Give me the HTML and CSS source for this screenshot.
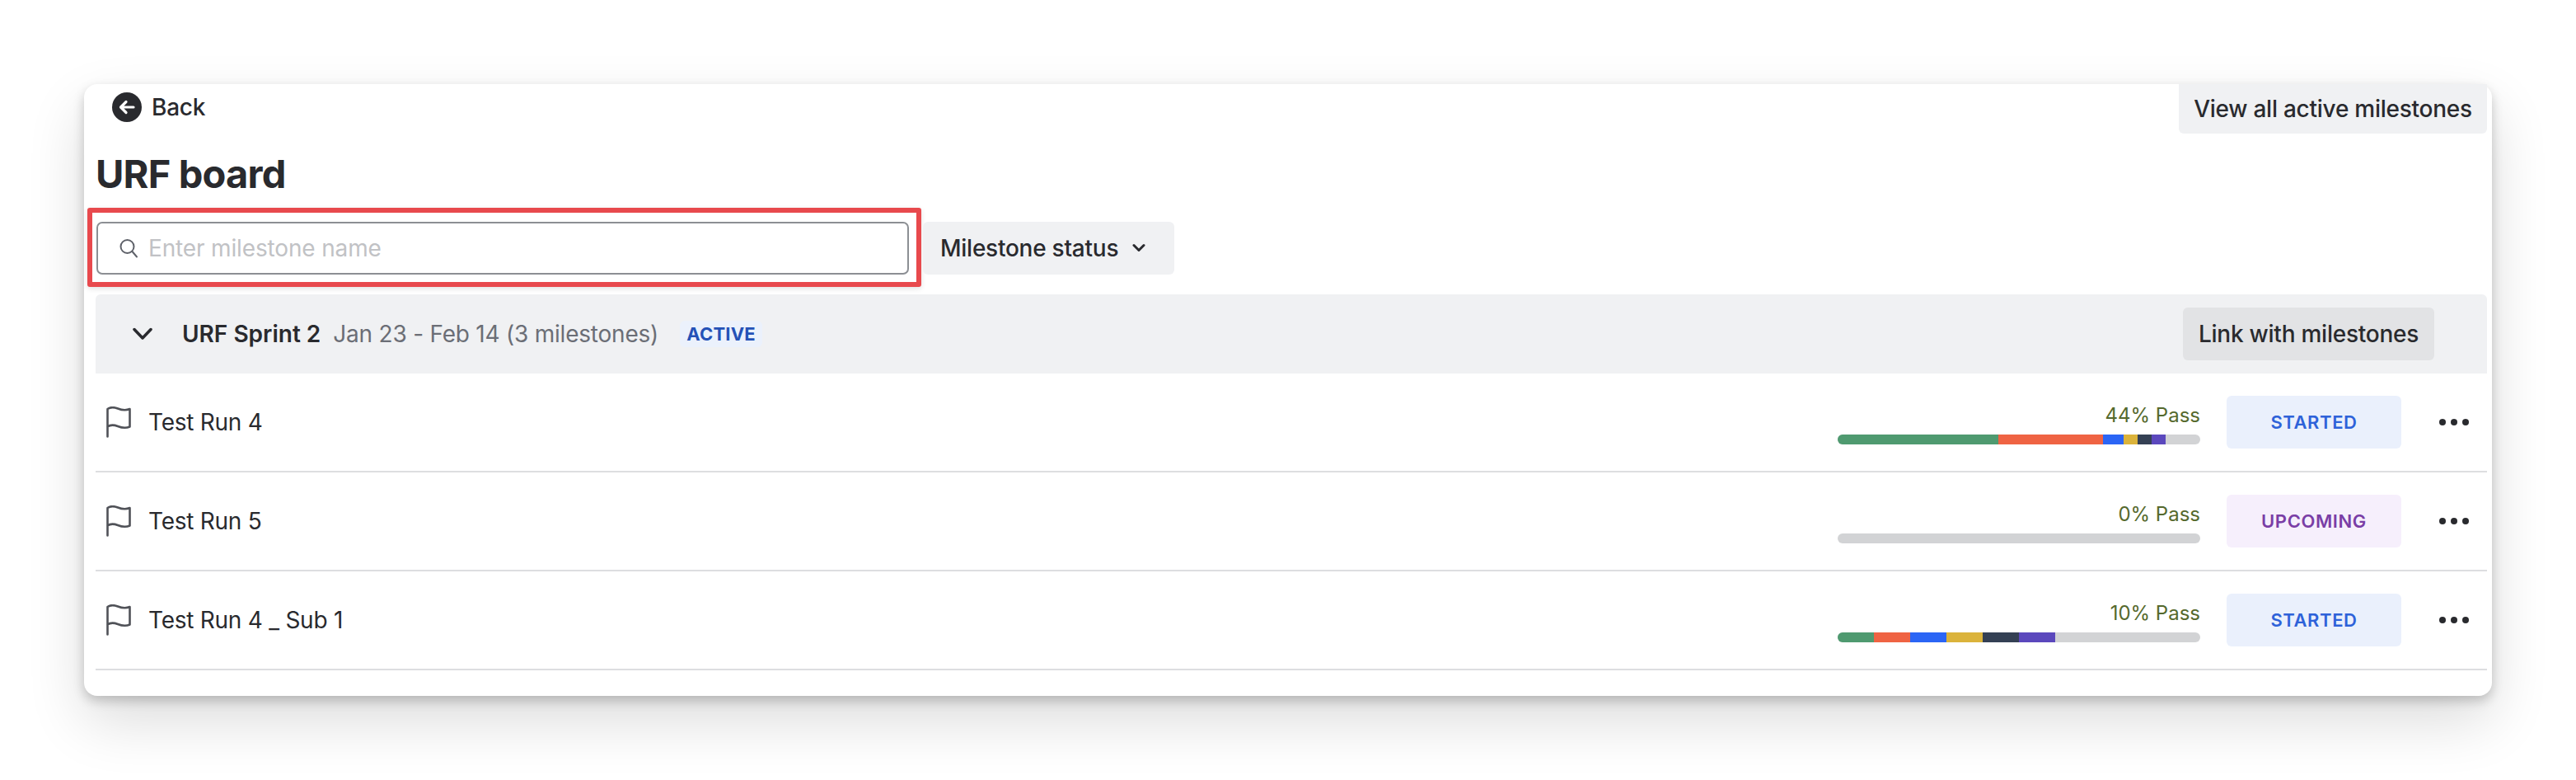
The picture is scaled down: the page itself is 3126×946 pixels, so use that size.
FILE: index.html
```html
<!DOCTYPE html>
<html lang="en">
<head>
    <meta charset="UTF-8">
    <meta name="viewport" content="width=device-width, initial-scale=1.0">
    <title>URF board</title>
    <link rel="stylesheet" href="styles.css">
</head>
<body>

<div class="board-card">
    <div class="top-bar">
        <a class="back-link" href="#">
            <svg class="back-icon" viewBox="0 0 36 36">
                <circle cx="18" cy="18" r="18" fill="#292a2e"/>
                <path d="M26 18H11M17 11.500L10.500 18L17 24.500" fill="none" stroke="#fff" stroke-width="3.200" stroke-linecap="round" stroke-linejoin="round"/>
            </svg>
            Back
        </a>
        <button class="btn btn-view-all">View all active milestones</button>
    </div>

    <h1 class="board-title">URF board</h1>

    <div class="filters">
        <div class="search-highlight">
            <label class="search-box">
                <svg class="search-icon" viewBox="0 0 24 24">
                    <circle cx="10.500" cy="10" r="8" fill="none" stroke="#5f626a" stroke-width="2"/>
                    <path d="M16.500 16L22 22.500" fill="none" stroke="#5f626a" stroke-width="2" stroke-linecap="round"/>
                </svg>
                <input type="text" placeholder="Enter milestone name">
            </label>
        </div>
        <button class="btn btn-status">
            Milestone status
            <svg class="chevron-small" viewBox="0 0 16 12">
                <path d="M2 2.500L8 8.500L14 2.500" fill="none" stroke="#292a2e" stroke-width="3" stroke-linecap="round" stroke-linejoin="round"/>
            </svg>
        </button>
    </div>

    <div class="sprint-header">
        <svg class="chevron-large" viewBox="0 0 24 16">
            <path d="M2 2.500L12 13L22 2.500" fill="none" stroke="#292a2e" stroke-width="3.500" stroke-linecap="round" stroke-linejoin="round"/>
        </svg>
        <span class="sprint-name">URF Sprint 2</span>
        <span class="sprint-dates">Jan 23 - Feb 14 (3 milestones)</span>
        <span class="sprint-state">ACTIVE</span>
        <button class="btn btn-link">Link with milestones</button>
    </div>

    <div class="milestone-row">
        <svg class="flag-icon" viewBox="0 0 30 38">
            <path d="M1.500 36.500V3C5 0.500 10 1 14 2.500C19 4.500 24 5 28.500 3V24.500C24 26.500 19 26 14 24C10 22.500 5 22 1.500 24.500" fill="none" stroke="#505258" stroke-width="2.600" stroke-linecap="round" stroke-linejoin="round"/>
        </svg>
        <span class="milestone-name">Test Run 4</span>
        <div class="pass-block">
            <span class="pass-label">44% Pass</span>
            <div class="pass-bar">
                <i class="seg-passed" style="width: 195px"></i>
                <i class="seg-failed" style="width: 127px"></i>
                <i class="seg-blue" style="width: 25px"></i>
                <i class="seg-yellow" style="width: 17px"></i>
                <i class="seg-dark" style="width: 17px"></i>
                <i class="seg-purple" style="width: 17px"></i>
            </div>
        </div>
        <span class="status status-started">STARTED</span>
        <span class="more-dots"><i></i><i></i><i></i></span>
    </div>

    <div class="milestone-row">
        <svg class="flag-icon" viewBox="0 0 30 38">
            <path d="M1.500 36.500V3C5 0.500 10 1 14 2.500C19 4.500 24 5 28.500 3V24.500C24 26.500 19 26 14 24C10 22.500 5 22 1.500 24.500" fill="none" stroke="#505258" stroke-width="2.600" stroke-linecap="round" stroke-linejoin="round"/>
        </svg>
        <span class="milestone-name">Test Run 5</span>
        <div class="pass-block">
            <span class="pass-label">0% Pass</span>
            <div class="pass-bar"></div>
        </div>
        <span class="status status-upcoming">UPCOMING</span>
        <span class="more-dots"><i></i><i></i><i></i></span>
    </div>

    <div class="milestone-row">
        <svg class="flag-icon" viewBox="0 0 30 38">
            <path d="M1.500 36.500V3C5 0.500 10 1 14 2.500C19 4.500 24 5 28.500 3V24.500C24 26.500 19 26 14 24C10 22.500 5 22 1.500 24.500" fill="none" stroke="#505258" stroke-width="2.600" stroke-linecap="round" stroke-linejoin="round"/>
        </svg>
        <span class="milestone-name">Test Run 4 _ Sub 1</span>
        <div class="pass-block">
            <span class="pass-label">10% Pass</span>
            <div class="pass-bar">
                <i class="seg-passed" style="width: 44px"></i>
                <i class="seg-failed" style="width: 44px"></i>
                <i class="seg-blue" style="width: 44px"></i>
                <i class="seg-yellow" style="width: 44px"></i>
                <i class="seg-dark" style="width: 44px"></i>
                <i class="seg-purple" style="width: 44px"></i>
            </div>
        </div>
        <span class="status status-started">STARTED</span>
        <span class="more-dots"><i></i><i></i><i></i></span>
    </div>
</div>

</body>
</html>
```

FILE: styles.css
```css
html {
    height: 100%;
}

body {
    font-family: Inter, "Noto Sans", sans-serif;
    background-color: #fff;
    color: #292a2e;
    margin: 0;
    min-height: 100%;
    box-sizing: border-box;
    padding: 102px 102px 0;
}

.board-card {
    width: 2922px;
    height: 742px;
    box-sizing: border-box;
    padding: 0 6px 0 14px;
    background-color: #fff;
    border-radius: 16px;
    box-shadow: 0 6px 14px rgba(0, 0, 0, 0.2), 0 30px 70px rgba(0, 0, 0, 0.14);
}

.btn {
    border: none;
    border-radius: 6px;
    background-color: #f0f1f3;
    color: #292a2e;
    font-family: inherit;
    font-size: 28px;
    font-weight: 500;
    letter-spacing: -0.25px;
    cursor: pointer;
}

.top-bar {
    display: flex;
    justify-content: space-between;
    height: 60px;
}

.back-link {
    display: flex;
    align-items: center;
    gap: 12px;
    height: 56px;
    margin-left: 20px;
    color: #292a2e;
    font-size: 28px;
    font-weight: 500;
    letter-spacing: -0.25px;
    text-decoration: none;
}

.back-icon {
    width: 36px;
    height: 36px;
}

.btn-view-all {
    width: 374px;
    height: 60px;
    border-radius: 0 0 6px 6px;
}

.board-title {
    margin: 0;
    padding-top: 20px;
    height: 70px;
    font-size: 47px;
    line-height: 58px;
    font-weight: 700;
    letter-spacing: -0.8px;
}

.filters {
    display: flex;
    align-items: flex-start;
    height: 96px;
    margin-left: -10px;
}

.search-highlight {
    width: 1012px;
    height: 96px;
    box-sizing: border-box;
    padding: 11px 9px 9px 5px;
    border: 6px solid #e8494d;
    border-radius: 3px;
    box-shadow: 0 2px 6px rgba(0, 0, 0, 0.12);
}

.search-box {
    display: flex;
    align-items: center;
    gap: 12px;
    height: 100%;
    box-sizing: border-box;
    padding-left: 25px;
    border: 2px solid #8c8f94;
    border-radius: 7px;
}

.search-icon {
    flex: none;
    width: 24px;
    height: 24px;
}

.search-box input {
    flex: 1;
    min-width: 0;
    border: none;
    outline: none;
    padding: 0;
    font-family: inherit;
    font-size: 28px;
    letter-spacing: -0.15px;
    color: #292a2e;
}

.search-box input::placeholder {
    color: #c1c2c5;
}

.btn-status {
    display: flex;
    align-items: center;
    gap: 17px;
    width: 305px;
    height: 64px;
    margin: 17px 0 0 2px;
    padding: 0 0 0 21px;
}

.chevron-small {
    width: 16px;
    height: 12px;
}

.sprint-header {
    display: flex;
    align-items: center;
    height: 96px;
    margin-top: 9px;
    padding: 0 64px 0 45px;
    background-color: #f0f1f3;
    border-radius: 6px 6px 0 0;
}

.chevron-large {
    flex: none;
    width: 24px;
    height: 16px;
    margin-right: 36px;
}

.sprint-name {
    font-size: 28px;
    font-weight: 600;
}

.sprint-dates {
    margin-left: 15px;
    font-size: 28px;
    letter-spacing: -0.22px;
    color: #6b6e76;
}

.sprint-state {
    width: 100px;
    margin-left: 26px;
    padding: 4px 0;
    background-color: #ebf1fc;
    border-radius: 6px;
    color: #2451b7;
    font-size: 22px;
    font-weight: 700;
    line-height: 24px;
    letter-spacing: 0.2px;
    text-align: center;
}

.btn-link {
    width: 305px;
    height: 64px;
    margin-left: auto;
    padding: 0;
    background-color: #e2e3e5;
}

.milestone-row {
    display: flex;
    align-items: center;
    height: 118px;
    border-bottom: 2px solid #dddee0;
    padding-left: 13px;
    padding-right: 22px;
}

.flag-icon {
    flex: none;
    width: 30px;
    height: 38px;
    margin-right: 21px;
}

.milestone-name {
    font-size: 28px;
    letter-spacing: -0.25px;
}

.pass-block {
    display: flex;
    flex-direction: column;
    align-items: flex-end;
    gap: 8px;
    width: 440px;
    padding-top: 4px;
    margin-left: auto;
}

.pass-label {
    font-size: 24px;
    line-height: 30px;
    color: #55692d;
}

.pass-bar {
    display: flex;
    width: 100%;
    height: 12px;
    overflow: hidden;
    border-radius: 6px;
    background-color: #d2d3d5;
}

.pass-bar i {
    display: block;
}

.seg-passed { background-color: #4f9a70; }
.seg-failed { background-color: #ef6343; }
.seg-blue { background-color: #2b65f5; }
.seg-yellow { background-color: #dbb33b; }
.seg-dark { background-color: #344054; }
.seg-purple { background-color: #5b48bd; }

.status {
    display: flex;
    align-items: center;
    justify-content: center;
    width: 212px;
    height: 64px;
    margin-left: 32px;
    border-radius: 6px;
    font-size: 22px;
    font-weight: 600;
    letter-spacing: 0.6px;
}

.status-started {
    background-color: #eaf0fc;
    color: #2e62d9;
}

.status-upcoming {
    background-color: #f6effc;
    color: #7a3ea6;
}

.more-dots {
    display: flex;
    gap: 6px;
    margin-left: 46px;
}

.more-dots i {
    width: 8px;
    height: 8px;
    border-radius: 50%;
    background-color: #292a2e;
}
```
